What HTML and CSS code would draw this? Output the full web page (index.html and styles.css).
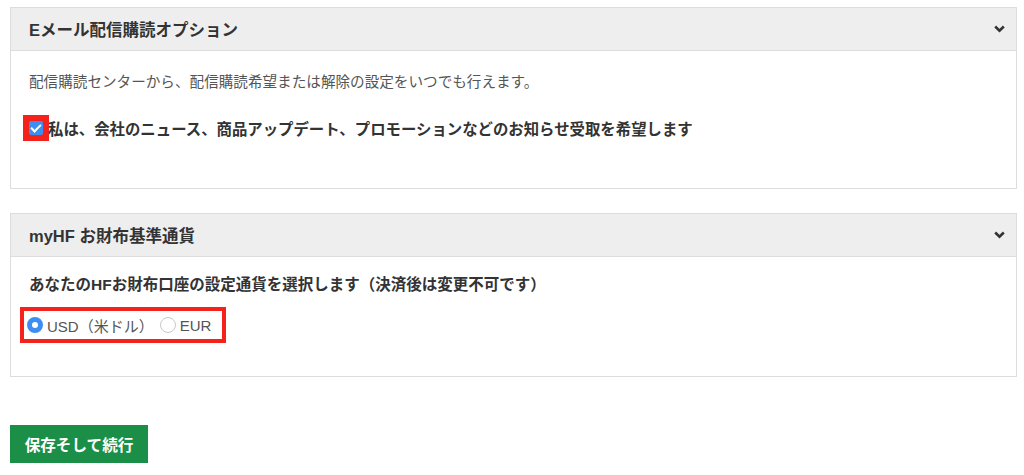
FILE: index.html
```html
<!DOCTYPE html>
<html lang="ja">
<head>
    <meta charset="UTF-8">
    <title>設定</title>
    <link rel="stylesheet" href="styles.css">
</head>
<body>
    <div class="panel">
        <div class="panel-head">
            <span>Eメール配信購読オプション</span>
            <svg class="chevron" width="11" height="8" viewBox="0 0 11 8"><path d="M1.2 1.5 L5.5 5.6 L9.8 1.5" fill="none" stroke="#333" stroke-width="2.6"/></svg>
        </div>
        <div class="panel-body email-body">
            <p class="note">配信購読センターから、配信購読希望または解除の設定をいつでも行えます。</p>
            <label class="check-row">
                <span class="mark-box"><input type="checkbox" class="check" checked></span>私は、会社のニュース、商品アップデート、プロモーションなどのお知らせ受取を希望します
            </label>
        </div>
    </div>

    <div class="panel">
        <div class="panel-head">
            <span>myHF お財布基準通貨</span>
            <svg class="chevron" width="11" height="8" viewBox="0 0 11 8"><path d="M1.2 1.5 L5.5 5.6 L9.8 1.5" fill="none" stroke="#333" stroke-width="2.6"/></svg>
        </div>
        <div class="panel-body wallet-body">
            <p class="question">あなたのHFお財布口座の設定通貨を選択します（決済後は変更不可です）</p>
            <div class="radio-box">
                <label class="radio-item"><input type="radio" name="currency" class="radio" checked>USD（米ドル）</label>
                <label class="radio-item"><input type="radio" name="currency" class="radio">EUR</label>
            </div>
        </div>
    </div>

    <button class="save-btn">保存そして続行</button>
</body>
</html>
```

FILE: styles.css
```css
body {
    margin: 0;
    padding: 7px 7px 0 10px;
    font-family: "Liberation Sans", "Noto Sans CJK JP", sans-serif;
    color: #333;
    background: #fff;
}
.panel {
    border: 1px solid #ddd;
    margin-bottom: 24px;
}
.panel-head {
    height: 42px;
    background: #eeeeee;
    border-bottom: 1px solid #ddd;
    display: flex;
    align-items: center;
    justify-content: space-between;
    padding: 0 11px 0 18px;
    font-size: 16.5px;
    font-weight: bold;
    color: #333;
}
.chevron { display: block; }
.panel-body { padding: 21px 18px 0 18px; }
.email-body { height: 116px; }
.wallet-body { height: 101px; padding-top: 18px; }
.note {
    margin: 0;
    font-size: 14.6px;
    line-height: 20px;
    color: #555;
}
.check-row {
    display: flex;
    align-items: center;
    margin-top: 23px;
    font-size: 15.4px;
    font-weight: bold;
    color: #333;
}
.mark-box {
    display: flex;
    background: #f5221b;
    padding: 6px;
    margin-left: -6px;
    margin-right: -1px;
}
.check {
    appearance: none;
    -webkit-appearance: none;
    margin: 0;
    width: 14px;
    height: 14px;
    border-radius: 2px;
    background: #3d8ef2;
    position: relative;
}
.check::after {
    content: "";
    position: absolute;
    left: 4px;
    top: 1px;
    width: 4px;
    height: 8px;
    border: solid #fff;
    border-width: 0 2px 2px 0;
    transform: rotate(45deg);
}
.question {
    margin: 0;
    font-size: 15.5px;
    line-height: 20px;
    font-weight: bold;
    color: #333;
}
.radio-box {
    display: inline-flex;
    align-items: center;
    gap: 6px;
    margin-top: 12px;
    margin-left: -9px;
    border: 4px solid #f5221b;
    padding: 0 11px 0 3px;
    height: 28px;
    font-size: 15px;
    color: #555;
}
.radio-item {
    display: flex;
    align-items: center;
    gap: 4px;
}
.radio {
    appearance: none;
    -webkit-appearance: none;
    margin: 0;
    width: 16px;
    height: 16px;
    border-radius: 50%;
    border: 1px solid #c8c8c8;
    background: #fff;
    box-sizing: border-box;
}
.radio:checked {
    border: 5px solid #3d8ef2;
    background: #fff;
}
.save-btn {
    display: block;
    margin-top: 48px;
    width: 138px;
    height: 38px;
    border: none;
    background: #1b8f48;
    color: #fff;
    font-family: "Liberation Sans", "Noto Sans CJK JP", sans-serif;
    font-size: 15.6px;
    font-weight: bold;
    padding: 0;
    cursor: pointer;
}
```
